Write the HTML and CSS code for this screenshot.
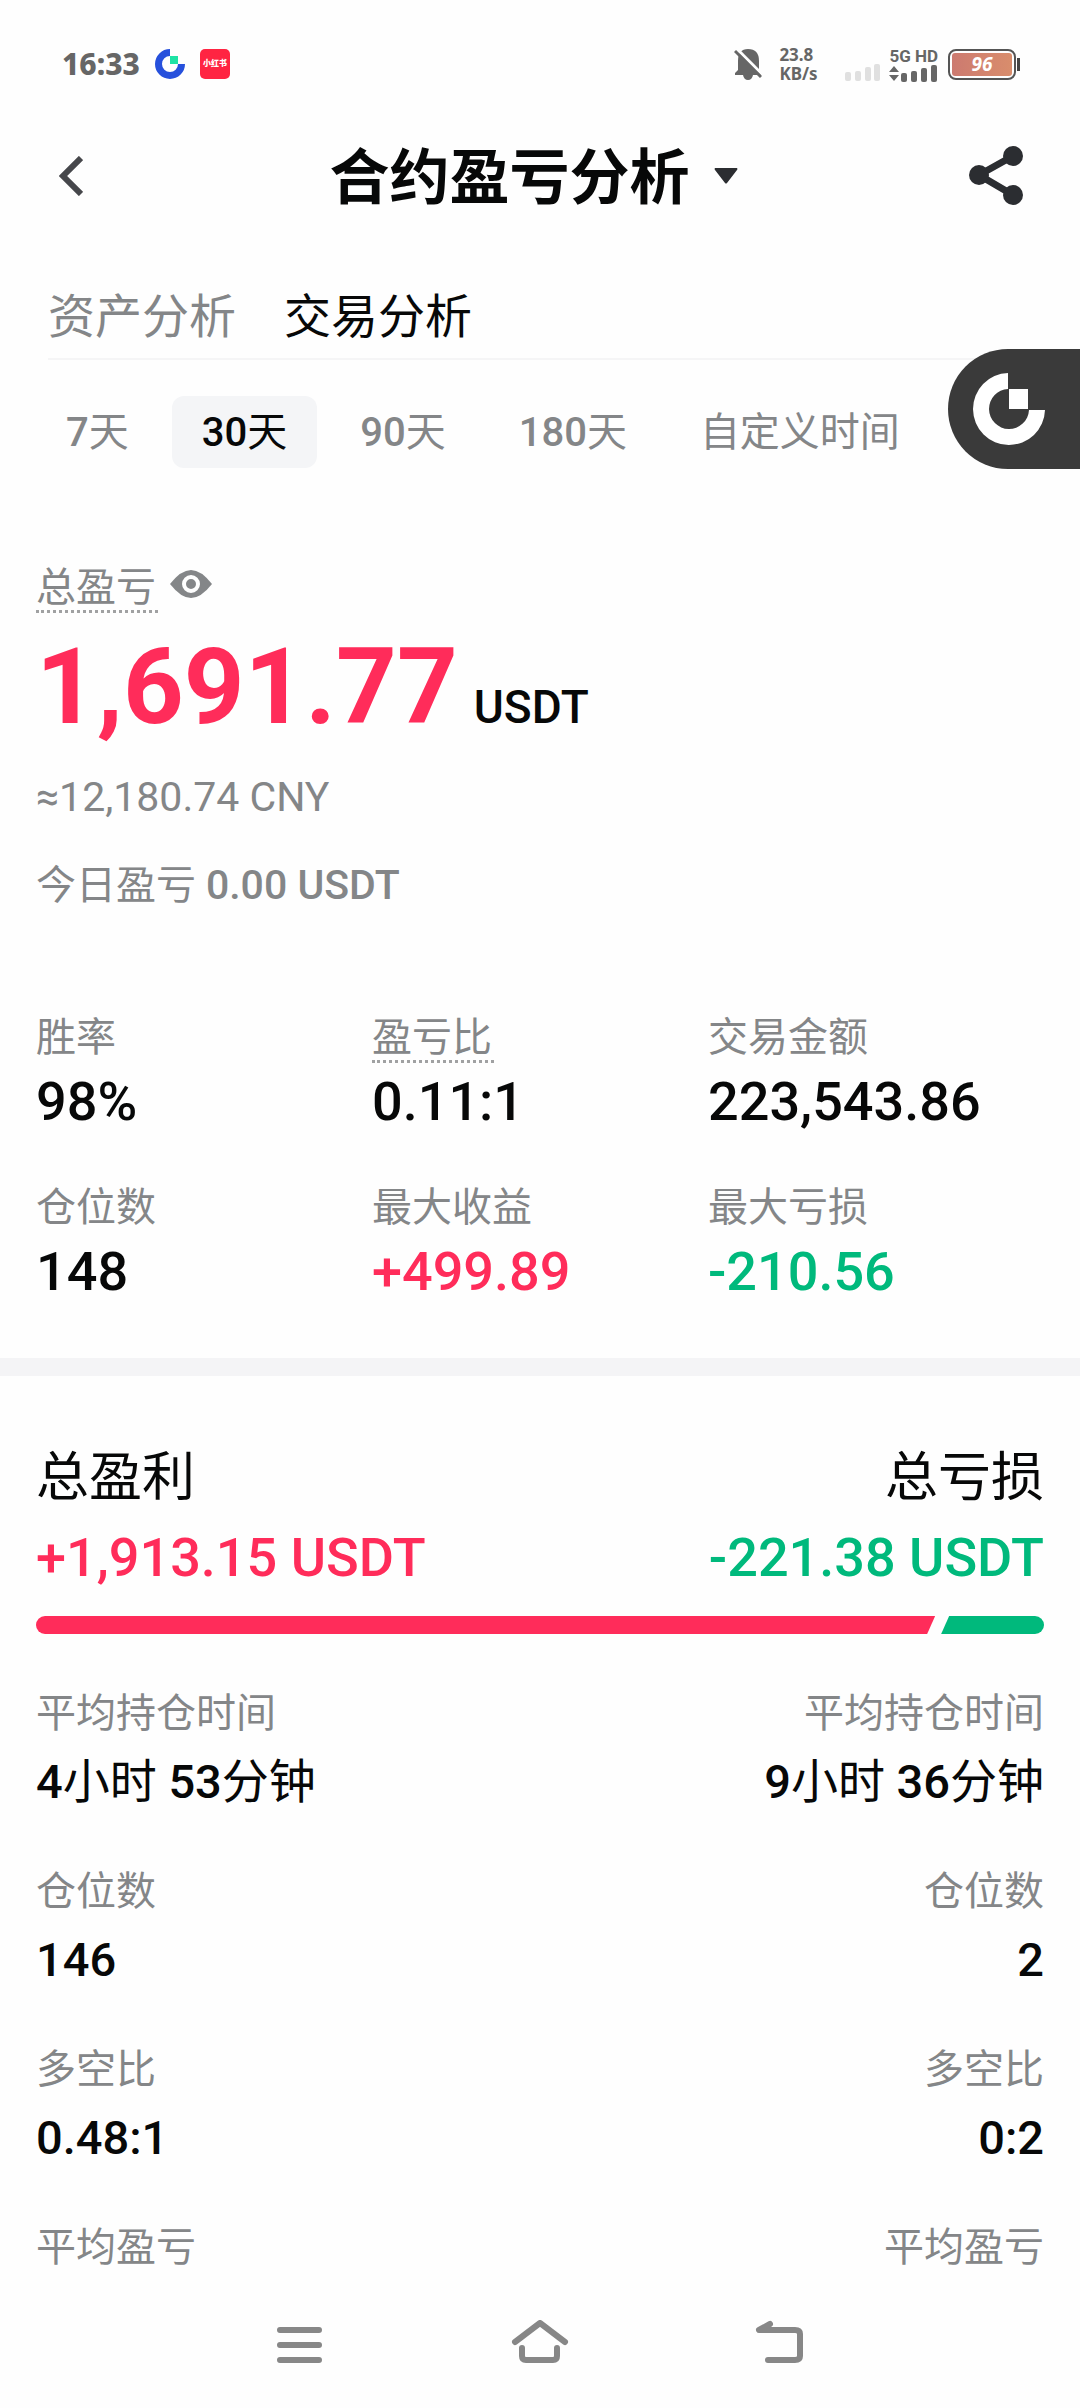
FILE: index.html
```html
<!DOCTYPE html>
<html lang="zh-CN">
<head>
<meta charset="utf-8">
<meta name="viewport" content="width=device-width, initial-scale=1">
<title>合约盈亏分析</title>
<link rel="stylesheet" href="styles.css">
</head>
<body>
<div class="app">
  <div class="statusbar">
    <div class="status-left">
      <span class="clock">16:33</span>
      <svg class="status-logo" viewBox="0 0 30 30" aria-hidden="true"><path d="M15 0A15 15 0 1 0 30 15H23A8 8 0 1 1 15 7Z" fill="#2650dc"/><rect x="15" y="7" width="8" height="8" fill="#1ee3a5"/></svg>
      <span class="app-badge">小红书</span>
    </div>
    <div class="status-right">
      <svg class="bell" viewBox="0 0 28 32" aria-hidden="true"><path d="M1 27V25L4 22V13Q4 1 14 1Q25 1 25 13V22L28 25V27H19Q18 32 14 32Q10 32 9 27Z" fill="#666"/><path d="M2 0L29 27" stroke="#fefefe" stroke-width="3"/><path d="M1 3L27 29" stroke="#666" stroke-width="3"/></svg>
      <span class="speed">23.8<br>KB/s</span>
      <svg class="signal-off" viewBox="0 0 36 17" fill="#e0e0e0" aria-hidden="true"><rect x="0" y="8" width="6" height="9" rx="2"/><rect x="10" y="7" width="6" height="10" rx="2"/><rect x="20" y="3" width="6" height="14" rx="2"/><rect x="29" y="0" width="6" height="17" rx="2"/></svg>
      <div class="cell">
        <span class="cell-label">5G HD</span>
        <svg class="signal-on" viewBox="0 0 48 17" fill="#666" aria-hidden="true"><path d="M5 1L10 7H0ZM5 16L0 10H10Z"/><rect x="12" y="8" width="6" height="9" rx="2"/><rect x="22" y="6" width="6" height="11" rx="2"/><rect x="32" y="3" width="6" height="14" rx="2"/><rect x="42" y="0" width="6" height="17" rx="2"/></svg>
      </div>
      <div class="battery"><span class="battery-level">96</span></div>
    </div>
  </div>

  <header class="header">
    <button class="back-button" aria-label="返回"><svg class="back" viewBox="0 0 24 40" aria-hidden="true"><path d="M22 2L4 20L22 38" fill="none" stroke="#46474b" stroke-width="6"/></svg></button>
    <button class="title-button"><span class="title">合约盈亏分析</span><svg class="caret" viewBox="0 0 24 16" aria-hidden="true"><path d="M1 0H23Q24 1 23 2L13 15Q12 16 11 15L1 2Q0 1 1 0Z" fill="#2b2d31"/></svg></button>
    <button class="share-button" aria-label="分享"><svg class="share" viewBox="0 0 54 60" aria-hidden="true"><path d="M44 10L10 29L44 49" fill="none" stroke="#2b2d31" stroke-width="7"/><g fill="#2b2d31"><circle cx="44" cy="10" r="10"/><circle cx="10" cy="29" r="10"/><circle cx="44" cy="49" r="10"/></g></svg></button>
  </header>

  <nav class="tabs">
    <a class="tab" href="#assets">资产分析</a>
    <a class="tab tab-active" href="#trades">交易分析</a>
  </nav>

  <div class="ranges">
    <button class="range"><span class="num">7</span>天</button>
    <button class="range range-active"><span class="num">30</span>天</button>
    <button class="range"><span class="num">90</span>天</button>
    <button class="range"><span class="num">180</span>天</button>
    <button class="range">自定义时间</button>
  </div>

  <button class="float-logo" aria-label="快捷入口"><svg class="float-icon" viewBox="0 0 73 73" aria-hidden="true"><path d="M36 0A36 36 0 1 0 73 37H57A20 20 0 1 1 36 16Z" fill="#fff"/><rect x="37" y="16" width="19" height="20" fill="#fff"/></svg></button>

  <section class="summary">
    <div class="summary-label"><span class="label dotted">总盈亏</span><button class="eye-button" aria-label="隐藏金额"><svg class="eye" viewBox="0 0 42 28" aria-hidden="true"><path d="M0 14Q11 0 21 0Q31 0 42 14Q31 28 21 28Q11 28 0 14Z" fill="#848688"/><circle cx="21" cy="14" r="7" fill="#848688" stroke="#fefefe" stroke-width="4"/></svg></button></div>
    <div class="total"><span class="total-value">1,691.77</span><span class="total-unit">USDT</span></div>
    <div class="approx">≈12,180.74 CNY</div>
    <div class="today">今日盈亏 <span class="today-value">0.00 USDT</span></div>
  </section>

  <dl class="stats">
    <div class="stat"><dt class="label">胜率</dt><dd class="stat-value">98%</dd></div>
    <div class="stat"><dt class="label"><span class="dotted">盈亏比</span></dt><dd class="stat-value">0.11:1</dd></div>
    <div class="stat"><dt class="label">交易金额</dt><dd class="stat-value">223,543.86</dd></div>
    <div class="stat"><dt class="label">仓位数</dt><dd class="stat-value">148</dd></div>
    <div class="stat"><dt class="label">最大收益</dt><dd class="stat-value gain">+499.89</dd></div>
    <div class="stat"><dt class="label">最大亏损</dt><dd class="stat-value loss">-210.56</dd></div>
  </dl>

  <section class="compare">
    <div class="pair">
      <div class="side"><h2 class="side-title">总盈利</h2><div class="side-total gain">+1,913.15 USDT</div></div>
      <div class="side side-end"><h2 class="side-title">总亏损</h2><div class="side-total loss">-221.38 USDT</div></div>
    </div>
    <div class="bar"><div class="bar-gain"></div><div class="bar-loss" style="width: 10.8%"></div></div>
    <div class="pair detail">
      <div class="side"><div class="label">平均持仓时间</div><div class="detail-value"><span class="num">4</span>小时 <span class="num">53</span>分钟</div></div>
      <div class="side side-end"><div class="label">平均持仓时间</div><div class="detail-value"><span class="num">9</span>小时 <span class="num">36</span>分钟</div></div>
    </div>
    <div class="pair detail">
      <div class="side"><div class="label">仓位数</div><div class="detail-value"><span class="num">146</span></div></div>
      <div class="side side-end"><div class="label">仓位数</div><div class="detail-value"><span class="num">2</span></div></div>
    </div>
    <div class="pair detail">
      <div class="side"><div class="label">多空比</div><div class="detail-value"><span class="num">0.48:1</span></div></div>
      <div class="side side-end"><div class="label">多空比</div><div class="detail-value"><span class="num">0:2</span></div></div>
    </div>
    <div class="pair detail">
      <div class="side"><div class="label">平均盈亏</div></div>
      <div class="side side-end"><div class="label">平均盈亏</div></div>
    </div>
  </section>

  <nav class="sysnav">
    <button class="sys-button" aria-label="最近任务"><svg class="sys-icon" viewBox="0 0 60 48" fill="none" stroke="#878787" stroke-width="6" stroke-linecap="round" aria-hidden="true"><path d="M10 10H49M10 25H49M10 40H49"/></svg></button>
    <button class="sys-button" aria-label="主屏幕"><svg class="sys-icon" viewBox="0 0 60 48" fill="none" stroke="#878787" stroke-width="6" stroke-linecap="round" stroke-linejoin="round" aria-hidden="true"><path d="M5 22L30 3L55 22M12 28V36Q12 40 16 40H43Q47 40 47 36V28"/></svg></button>
    <button class="sys-button" aria-label="返回上一页"><svg class="sys-icon" viewBox="0 0 60 48" fill="none" stroke="#878787" stroke-width="6" stroke-linecap="round" stroke-linejoin="round" aria-hidden="true"><path d="M20 4L9 10H45Q50 10 50 14V36Q50 40 45 40H18"/></svg></button>
  </nav>
</div>
</body>
</html>
```

FILE: styles.css
```css
* { box-sizing: border-box; }
body {
  margin: 0;
  background: #fefefe;
  color: #070808;
  font-family: Roboto, "Noto Sans CJK SC", sans-serif;
}
button {
  padding: 0;
  border: 0;
  background: none;
  color: inherit;
  font: inherit;
}
svg { display: block; }
h2, dl, dd { margin: 0; }

.app {
  position: relative;
  display: flex;
  flex-direction: column;
  min-height: 100vh;
}

.statusbar {
  display: flex;
  justify-content: space-between;
  align-items: center;
  height: 128px;
  padding: 0 60px 0 62px;
  color: #666;
}
.status-left, .status-right { display: flex; align-items: center; }
.status-left { gap: 15px; }
.clock { font: 800 30px/32px "Noto Sans", sans-serif; }
.status-logo { width: 30px; height: 30px; }
.app-badge {
  width: 30px;
  border-radius: 5px;
  background: #ff2442;
  color: #fff;
  font-size: 8px;
  font-weight: 800;
  line-height: 30px;
  text-align: center;
}
.bell { width: 28px; height: 32px; margin-right: 17px; }
.speed { width: 66px; font: 700 17px/19px "Noto Sans", sans-serif; }
.signal-off { width: 36px; height: 17px; margin: 16px 8px 0 0; }
.cell { margin-right: 10px; }
.cell-label { display: block; font: 700 17px/18px Roboto, sans-serif; }
.signal-on { width: 48px; height: 17px; }
.battery {
  position: relative;
  width: 68px;
  height: 31px;
  margin-right: 4px;
  padding: 2px;
  border: 2px solid #555;
  border-radius: 8px;
}
.battery::after {
  content: "";
  position: absolute;
  top: 7px;
  right: -6px;
  width: 3px;
  height: 13px;
  background: #444;
}
.battery-level {
  display: block;
  border-radius: 3px;
  background: linear-gradient(90deg, #cc7a70, #d98d6c);
  color: #fff;
  font: italic 700 19px/23px "Noto Sans", sans-serif;
  text-align: center;
}

.header {
  display: flex;
  align-items: center;
  justify-content: space-between;
  height: 96px;
  padding: 0 57px 0 59px;
}
.back-button { width: 39px; }
.back { width: 24px; height: 40px; }
.title-button { display: flex; align-items: center; gap: 24px; }
.title { padding-top: 5px; font-size: 60px; font-weight: 700; line-height: 84px; }
.caret { width: 24px; height: 16px; }
.share { width: 54px; height: 60px; }

.tabs {
  display: flex;
  gap: 48px;
  height: 136px;
  margin: 0 0 0 48px;
  padding-top: 59px;
  border-bottom: 2px solid #f5f5f6;
}
.tab {
  color: #848688;
  font-size: 47px;
  line-height: 68px;
  text-decoration: none;
}
.tab-active { color: #070808; }

.num { font-weight: 500; }

.ranges { display: flex; gap: 13px; padding: 36px 36px 0; }
.range {
  padding: 2px 30px 0;
  border-radius: 12px;
  color: #848688;
  font-size: 40px;
  line-height: 70px;
  white-space: nowrap;
}
.range-active { background: #f4f5f7; color: #070808; }

.float-logo {
  position: absolute;
  top: 349px;
  right: 0;
  width: 132px;
  height: 120px;
  padding-left: 24px;
  border-radius: 60px 0 0 60px;
  background: #3a3a3a;
}
.float-icon { width: 73px; height: 73px; }

.label { color: #848688; font-size: 40px; line-height: 56px; }
.dotted {
  display: inline-block;
  padding: 2px 2px 0 0;
  border-bottom: 3px dotted #a0a1a2;
  line-height: 44px;
}
.gain { color: #ff2c5a; }
.loss { color: #00b97c; }

.summary { padding: 96px 36px 0; }
.summary-label { display: flex; align-items: center; gap: 12px; }
.eye-button { display: flex; padding-bottom: 10px; }
.eye { width: 42px; height: 28px; }
.total { display: flex; align-items: baseline; gap: 16px; padding-top: 2px; }
.total-value { color: #ff2c5a; font-size: 106px; font-weight: 700; line-height: 144px; }
.total-unit { font-size: 46px; font-weight: 500; }
.approx { padding-top: 10px; color: #848688; font-size: 41px; line-height: 56px; }
.today { padding-top: 32px; color: #848688; font-size: 40px; line-height: 56px; }
.today-value { font-size: 41px; font-weight: 500; }

.stats {
  display: grid;
  grid-template-columns: repeat(3, 1fr);
  row-gap: 42px;
  padding: 96px 36px 50px;
  border-bottom: 18px solid #f4f4f6;
}
.stat-value { font-size: 54px; font-weight: 500; line-height: 72px; }

.compare { padding: 62px 36px 0; }
.pair { display: flex; justify-content: space-between; }
.side-end { text-align: right; }
.side-title { font-size: 53px; font-weight: 400; line-height: 80px; }
.side-total { font-size: 54px; font-weight: 500; line-height: 80px; }
.bar { display: flex; height: 18px; margin: 18px 0 10px; }
.bar-gain {
  flex: 1;
  border-radius: 9px 0 0 9px;
  background: #ff2c5a;
  clip-path: polygon(0 0, 100% 0, calc(100% - 8px) 100%, 0 100%);
}
.bar-loss {
  border-radius: 0 9px 9px 0;
  background: #00b97c;
  clip-path: polygon(14px 0, 100% 0, 100% 100%, 6px 100%);
}
.detail { padding-top: 42px; }
.detail-value { font-size: 47px; line-height: 80px; }

.sysnav {
  display: flex;
  justify-content: center;
  gap: 180px;
  margin-top: auto;
  padding: 24px 0 40px;
}
.sys-icon { width: 60px; height: 48px; }
```
